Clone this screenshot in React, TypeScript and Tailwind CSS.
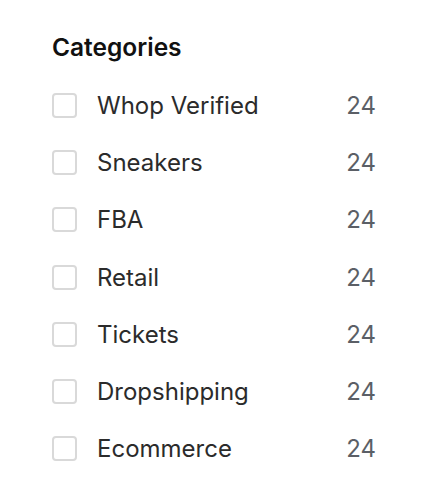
import React from "react";

const categories = [
  "Whop Verified",
  "Sneakers",
  "FBA",
  "Retail",
  "Tickets",
  "Dropshipping",
  "Ecommerce",
];

export default function App() {
  return (
    <div className="min-h-screen bg-white pl-[52px] pt-[32px]" style={{ fontFamily: "Inter, 'Noto Sans', sans-serif" }}>
      <h2 className="text-[24.5px] font-semibold leading-[30px] text-[#111111]">Categories</h2>
      <ul className="mt-[27px] flex w-[324px] flex-col gap-[24.2px]">
        {categories.map((name) => (
          <li key={name} className="flex h-[33px] items-center justify-between">
            <label className="flex items-center gap-[20px]">
              <span className="h-[25px] w-[25px] rounded-[4px] border-2 border-[#d9d9d9] bg-white" />
              <span className="text-[24px] leading-[33px] text-[#2b2b2b]">{name}</span>
            </label>
            <span className="text-[24px] leading-[33px] text-[#5b5f66]">24</span>
          </li>
        ))}
      </ul>
    </div>
  );
}
